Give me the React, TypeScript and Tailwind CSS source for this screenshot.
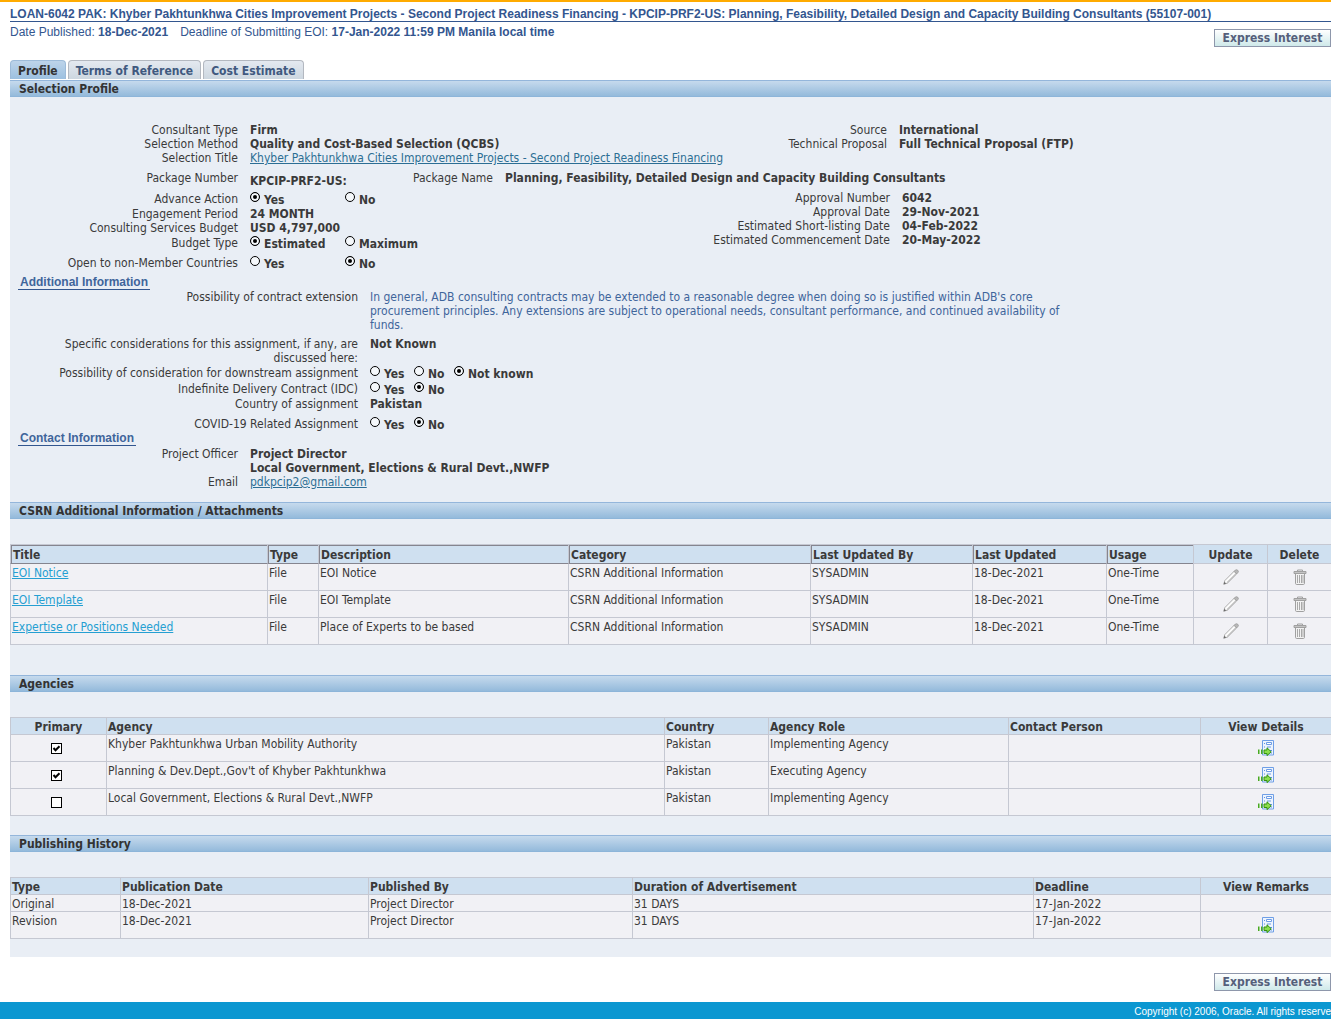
import type { ReactNode } from "react"

const TABS = ["Profile", "Terms of Reference", "Cost Estimate"]

const ATTACHMENTS = [
  { title: "EOI Notice", description: "EOI Notice" },
  { title: "EOI Template", description: "EOI Template" },
  { title: "Expertise or Positions Needed", description: "Place of Experts to be based" },
]

const AGENCIES = [
  { primary: true, name: "Khyber Pakhtunkhwa Urban Mobility Authority", role: "Implementing Agency" },
  { primary: true, name: "Planning & Dev.Dept.,Gov't of Khyber Pakhtunkhwa", role: "Executing Agency" },
  { primary: false, name: "Local Government, Elections & Rural Devt.,NWFP", role: "Implementing Agency" },
]

const HISTORY = [
  { type: "Original", remarks: false },
  { type: "Revision", remarks: true },
]

const thBase = "border-l border-b border-[#c5c8d2] bg-[#cfe0f0] px-px pt-0.5 font-bold leading-[14px]"
const th = `${thBase} text-left`
const thCenter = `${thBase} text-center`
const thSort =
  "border-l border-l-[#c5c8d2] border-b border-b-[#85858f] bg-[#cfe0f0] px-0.5 pt-0.5 text-left font-bold leading-4 shadow-[inset_1px_1px_0_#85858f]"
const td = "h-[27px] border-l border-b border-[#c5c8d2] px-px pt-0.5 align-top"
const tdIcon = "h-[27px] border-l border-b border-[#c5c8d2] align-middle"
const tdShort = "border-l border-b border-[#c5c8d2] px-px pt-0.5 align-top"
const table = "w-full table-fixed border-separate border-spacing-0 border-t border-[#c5c8d2] bg-[#f1f1f5]"

function SectionHeader({ children }: { children: ReactNode }) {
  return (
    <h2 className="h-[17px] border-t border-b border-t-[#94b6db] border-b-[#8db5d9] bg-linear-to-b from-[#c6daed] to-[#94badb] pl-[9px] font-bold leading-[17px] text-[#333]">
      {children}
    </h2>
  )
}

function SubHeader({ children }: { children: ReactNode }) {
  return (
    <h3 className="ml-2 h-[14px] w-fit border-b border-[#32568f] px-0.5 font-['Liberation_Sans',Arial,sans-serif] font-bold leading-[13px] text-[#3f659b]">
      {children}
    </h3>
  )
}

function Field({ label, labelClass, children }: { label: string; labelClass: string; children: ReactNode }) {
  return (
    <div className="flex gap-3">
      <dt className={`shrink-0 text-right ${labelClass}`}>{label}</dt>
      <dd className="min-w-0 font-bold">{children}</dd>
    </div>
  )
}

function RadioField({
  label,
  name,
  labelClass,
  options,
  widths,
  value,
}: {
  label: string
  name: string
  labelClass: string
  options: string[]
  widths: string[]
  value: string
}) {
  return (
    <div className="flex h-4 gap-3 leading-4" role="radiogroup" aria-label={label}>
      <dt className={`shrink-0 text-right ${labelClass}`}>{label}</dt>
      <dd className="flex font-bold leading-[18px]">
        {options.map((option, i) => (
          <label key={option} className={`flex items-start gap-1 whitespace-nowrap ${widths[i] ?? ""}`}>
            <input
              type="radio"
              name={name}
              defaultChecked={option === value}
              className="mt-px size-[10px] shrink-0 appearance-none rounded-full border border-black bg-[#f5f8fb] checked:bg-black checked:shadow-[inset_0_0_0_2px_#f5f8fb]"
            />
            {option}
          </label>
        ))}
      </dd>
    </div>
  )
}

function ExpressButton() {
  return (
    <button className="h-[18px] w-[117px] border border-[#8e97ab] bg-linear-to-b from-white to-[#cfe9ea] text-center font-['DejaVu_Sans_Condensed',Tahoma,sans-serif] font-bold leading-4 text-[#55607b]">
      Express Interest
    </button>
  )
}

function PencilIcon() {
  return (
    <svg viewBox="0 0 16 16" className="mx-auto block size-4">
      <path d="M1.8 11.6 11.2 2.2 13.8 4.8 4.4 14.2.8 15.2z" fill="#fcfcfc" stroke="#a3a3a3" strokeWidth=".9" />
      <path d="M4 13.6 13 4.6" stroke="#b9b9b9" strokeWidth="1.1" />
      <path d="M11 2.4 12.4 1Q13.6.3 14.8 1.3T15 3.4L13.6 5z" fill="#b8b8b8" stroke="#999" strokeWidth=".8" />
      <path d="M.6 15.4 1.4 12.8 3.2 14.6z" fill="#6a6a6a" />
    </svg>
  )
}

function TrashIcon() {
  return (
    <svg viewBox="0 0 16 16" className="mx-auto block size-4" fill="none" stroke="#a0a0a0">
      <path d="M3.5 4.5h9v9.8q0 1.2-1.2 1.2H4.7q-1.2 0-1.2-1.2z" fill="#f2f2f2" />
      <path d="M2 2.5h12v2H2z" fill="#c4c4c4" />
      <path d="M5.5 2.5V1h5v1.5" />
      <path d="M5.5 6v8M7.5 6v8M9.5 6v8M11 6v8" strokeWidth=".9" />
    </svg>
  )
}

function DetailsIcon() {
  return (
    <svg viewBox="0 0 16 16" className="mx-auto block size-4">
      <path d="M4.5.5h11v14.5h-11z" fill="#edf4fd" stroke="#6f9fe6" />
      <path d="M8.5 2.5h5v2h-5zM9 7h4" fill="#fff" stroke="#6c9ce6" />
      <path d="M6 3h1v1H6zM6 6.500h1v1H6zM12 10h2v1h-2zM12.500 12.500h1.500v1h-1.500z" fill="#5a8ee0" />
      <path d="M0 9.500h1.500v4.500H0zM3 9.500h1.500v4.500H3z" fill="#48ab20" />
      <path d="M6 10h3V7.800l4.200 4L9 15.600v-2.100H6z" fill="#8ade4c" stroke="#34920f" />
    </svg>
  )
}

export default function App() {
  return (
    <div className="overflow-hidden border-t-2 border-[#ffab00] bg-white font-['DejaVu_Sans_Condensed',Tahoma,sans-serif] text-[12px] leading-[14px] text-[#3a3a3a]">
      <div className="ml-[10px]">
        <header className="font-['Liberation_Sans',Arial,sans-serif] text-[#33568f]">
          <h1 className="h-5 border-b border-[#33568f] font-bold leading-6 whitespace-nowrap">
            LOAN-6042 PAK: Khyber Pakhtunkhwa Cities Improvement Projects - Second Project Readiness Financing -
            KPCIP-PRF2-US: Planning, Feasibility, Detailed Design and Capacity Building Consultants (55107-001)
          </h1>
          <div className="flex h-[38px] justify-between leading-5">
            <p className="flex gap-3">
              <span>
                Date Published: <b>18-Dec-2021</b>
              </span>
              <span>
                Deadline of Submitting EOI: <b>17-Jan-2022 11:59 PM Manila local time</b>
              </span>
            </p>
            <div className="flex items-start pt-[7px]">
              <ExpressButton />
            </div>
          </div>
        </header>

        <nav className="mb-px flex gap-0.5" aria-label="Sections">
          {TABS.map((tab, i) => (
            <a
              key={tab}
              href="#"
              className={`h-[19px] rounded-t border border-b-0 px-[7px] font-bold leading-5 whitespace-nowrap ${
                i === 0
                  ? "border-[#9dbbd9] bg-linear-to-b from-[#bdd4ea] to-[#9cc0e0] text-[#333]"
                  : "border-[#b3b8c0] bg-linear-to-b from-[#e4e9f0] to-[#cdd7e0] text-[#40597f]"
              }`}
            >
              {tab}
            </a>
          ))}
        </nav>

        <main className="bg-[#e9eef5] pb-[18px]">
          <SectionHeader>Selection Profile</SectionHeader>

          <dl className="flex pt-[26px]">
            <div className="w-[740px] shrink-0">
              <Field label="Consultant Type" labelClass="w-[228px]">Firm</Field>
              <Field label="Selection Method" labelClass="w-[228px]">Quality and Cost-Based Selection (QCBS)</Field>
              <Field label="Selection Title" labelClass="w-[228px]">
                <a href="#" className="font-normal text-[#2c6e94] underline">
                  Khyber Pakhtunkhwa Cities Improvement Projects - Second Project Readiness Financing
                </a>
              </Field>
            </div>
            <div>
              <Field label="Source" labelClass="w-[137px]">International</Field>
              <Field label="Technical Proposal" labelClass="w-[137px]">Full Technical Proposal (FTP)</Field>
            </div>
          </dl>

          <dl className="flex pt-1.5">
            <div className="w-[380px] shrink-0">
              <Field label="Package Number" labelClass="w-[228px]">
                <span className="block leading-5">KPCIP-PRF2-US:</span>
              </Field>
            </div>
            <Field label="Package Name" labelClass="w-[103px]">
              Planning, Feasibility, Detailed Design and Capacity Building Consultants
            </Field>
          </dl>

          <div className="flex">
            <dl className="w-[640px] shrink-0">
              <RadioField
                label="Advance Action"
                name="advance"
                labelClass="w-[228px]"
                options={["Yes", "No"]}
                widths={["w-[95px]"]}
                value="Yes"
              />
              <Field label="Engagement Period" labelClass="w-[228px]">24 MONTH</Field>
              <Field label="Consulting Services Budget" labelClass="w-[228px]">USD 4,797,000</Field>
              <RadioField
                label="Budget Type"
                name="budget"
                labelClass="w-[228px]"
                options={["Estimated", "Maximum"]}
                widths={["w-[95px]"]}
                value="Estimated"
              />
              <div className="pt-1">
                <RadioField
                  label="Open to non-Member Countries"
                  name="nonmember"
                  labelClass="w-[228px]"
                  options={["Yes", "No"]}
                  widths={["w-[95px]"]}
                  value="No"
                />
              </div>
            </dl>
            <dl>
              <Field label="Approval Number" labelClass="w-[240px]">6042</Field>
              <Field label="Approval Date" labelClass="w-[240px]">29-Nov-2021</Field>
              <Field label="Estimated Short-listing Date" labelClass="w-[240px]">04-Feb-2022</Field>
              <Field label="Estimated Commencement Date" labelClass="w-[240px]">20-May-2022</Field>
            </dl>
          </div>

          <div className="mt-[5px]">
            <SubHeader>Additional Information</SubHeader>
          </div>
          <dl>
            <Field label="Possibility of contract extension" labelClass="w-[348px]">
              <p className="max-w-[700px] font-normal text-[#3f659b]">
                In general, ADB consulting contracts may be extended to a reasonable degree when doing so is justified
                within ADB's core procurement principles. Any extensions are subject to operational needs, consultant
                performance, and continued availability of funds.
              </p>
            </Field>
            <div className="pt-[5px]">
              <Field
                label="Specific considerations for this assignment, if any, are discussed here:"
                labelClass="w-[348px] pl-12"
              >
                Not Known
              </Field>
            </div>
            <RadioField
              label="Possibility of consideration for downstream assignment"
              name="downstream"
              labelClass="w-[348px]"
              options={["Yes", "No", "Not known"]}
              widths={["w-11", "w-10"]}
              value="Not known"
            />
            <RadioField
              label="Indefinite Delivery Contract (IDC)"
              name="idc"
              labelClass="w-[348px]"
              options={["Yes", "No"]}
              widths={["w-11"]}
              value="No"
            />
            <Field label="Country of assignment" labelClass="w-[348px]">Pakistan</Field>
            <div className="pt-[5px]">
              <RadioField
                label="COVID-19 Related Assignment"
                name="covid"
                labelClass="w-[348px]"
                options={["Yes", "No"]}
                widths={["w-11"]}
                value="No"
              />
            </div>
          </dl>

          <SubHeader>Contact Information</SubHeader>
          <dl className="pt-px pb-[13px]">
            <Field label="Project Officer" labelClass="w-[228px]">
              Project Director
              <br />
              Local Government, Elections & Rural Devt.,NWFP
            </Field>
            <Field label="Email" labelClass="w-[228px]">
              <a href="mailto:pdkpcip2@gmail.com" className="font-normal text-[#2c6e94] underline">
                pdkpcip2@gmail.com
              </a>
            </Field>
          </dl>

          <SectionHeader>CSRN Additional Information / Attachments</SectionHeader>
          <div className="pt-[25px] pb-[30px]">
            <table className={table}>
              <colgroup>
                <col className="w-[257px]" />
                <col className="w-[51px]" />
                <col />
                <col className="w-[242px]" />
                <col className="w-[162px]" />
                <col className="w-[134px]" />
                <col className="w-[87px]" />
                <col className="w-[74px]" />
                <col className="w-[64px]" />
              </colgroup>
              <thead>
                <tr>
                  {["Title", "Type", "Description", "Category", "Last Updated By", "Last Updated", "Usage"].map((h) => (
                    <th key={h} className={thSort}>{h}</th>
                  ))}
                  <th className={thCenter}>Update</th>
                  <th className={thCenter}>Delete</th>
                </tr>
              </thead>
              <tbody>
                {ATTACHMENTS.map((a) => (
                  <tr key={a.title}>
                    <td className={td}>
                      <a href="#" className="text-[#259fd2] underline">{a.title}</a>
                    </td>
                    <td className={td}>File</td>
                    <td className={td}>{a.description}</td>
                    <td className={td}>CSRN Additional Information</td>
                    <td className={td}>SYSADMIN</td>
                    <td className={td}>18-Dec-2021</td>
                    <td className={td}>One-Time</td>
                    <td className={tdIcon}><PencilIcon /></td>
                    <td className={tdIcon}><TrashIcon /></td>
                  </tr>
                ))}
              </tbody>
            </table>
          </div>

          <SectionHeader>Agencies</SectionHeader>
          <div className="pt-[25px] pb-[19px]">
            <table className={table}>
              <colgroup>
                <col className="w-[96px]" />
                <col />
                <col className="w-[104px]" />
                <col className="w-[240px]" />
                <col className="w-[192px]" />
                <col className="w-[131px]" />
              </colgroup>
              <thead>
                <tr>
                  <th className={thCenter}>Primary</th>
                  <th className={th}>Agency</th>
                  <th className={th}>Country</th>
                  <th className={th}>Agency Role</th>
                  <th className={th}>Contact Person</th>
                  <th className={thCenter}>View Details</th>
                </tr>
              </thead>
              <tbody>
                {AGENCIES.map((a) => (
                  <tr key={a.name}>
                    <td className={`${tdIcon} pr-1`}>
                      <span className="relative mx-auto block size-[11px]">
                        <input
                          type="checkbox"
                          aria-label={a.name}
                          defaultChecked={a.primary}
                          className="peer block size-[11px] appearance-none border border-black bg-white"
                        />
                        <svg
                          viewBox="0 0 11 11"
                          className="pointer-events-none absolute inset-0 hidden size-[11px] peer-checked:block"
                        >
                          <path d="M2.5 5 4.5 7.2 8.5 3.2" fill="none" stroke="#000" strokeWidth="2" />
                        </svg>
                      </span>
                    </td>
                    <td className={td}>{a.name}</td>
                    <td className={td}>Pakistan</td>
                    <td className={td}>{a.role}</td>
                    <td className={td}></td>
                    <td className={tdIcon}><DetailsIcon /></td>
                  </tr>
                ))}
              </tbody>
            </table>
          </div>

          <SectionHeader>Publishing History</SectionHeader>
          <div className="pt-[25px]">
            <table className={table}>
              <colgroup>
                <col className="w-[110px]" />
                <col className="w-[248px]" />
                <col className="w-[264px]" />
                <col />
                <col className="w-[167px]" />
                <col className="w-[131px]" />
              </colgroup>
              <thead>
                <tr>
                  {["Type", "Publication Date", "Published By", "Duration of Advertisement", "Deadline"].map((h) => (
                    <th key={h} className={th}>{h}</th>
                  ))}
                  <th className={thCenter}>View Remarks</th>
                </tr>
              </thead>
              <tbody>
                {HISTORY.map((h) => (
                  <tr key={h.type}>
                    <td className={tdShort}>{h.type}</td>
                    <td className={tdShort}>18-Dec-2021</td>
                    <td className={tdShort}>Project Director</td>
                    <td className={tdShort}>31 DAYS</td>
                    <td className={tdShort}>17-Jan-2022</td>
                    {h.remarks ? (
                      <td className={tdIcon}><DetailsIcon /></td>
                    ) : (
                      <td className={tdShort}></td>
                    )}
                  </tr>
                ))}
              </tbody>
            </table>
          </div>
        </main>

        <div className="flex justify-end pt-4 pb-[11px]">
          <ExpressButton />
        </div>
      </div>

      <footer className="h-[17px] bg-[#0b97d1] text-right font-['Liberation_Sans',Arial,sans-serif] text-[10px] leading-[19px] text-white">
        Copyright (c) 2006, Oracle. All rights reserve
      </footer>
    </div>
  )
}
